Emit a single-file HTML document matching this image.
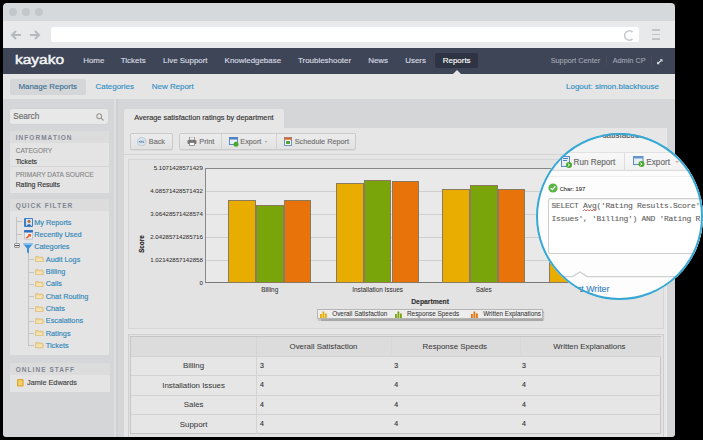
<!DOCTYPE html>
<html><head><meta charset="utf-8">
<style>
*{margin:0;padding:0;box-sizing:border-box}
html,body{width:703px;height:440px;overflow:hidden;background:#000;font-family:"Liberation Sans",sans-serif}
.a{position:absolute}
.t{position:absolute;white-space:nowrap;-webkit-text-stroke:0.14px}
#win{position:absolute;left:3px;top:3px;width:672px;height:434px;border-radius:4px 4px 3px 3px;overflow:hidden}
#pg{position:absolute;left:-3px;top:-3px;width:703px;height:440px}
</style></head><body>
<div id="win"><div id="pg">
<div class="a" style="left:0px;top:3px;width:675.00px;height:17.50px;background:#d5d9dc"></div>
<div class="a" style="left:8.5px;top:8.3px;width:8.00px;height:8.00px;border-radius:50%;background:#c3c7ca"></div>
<div class="a" style="left:21.5px;top:8.3px;width:8.00px;height:8.00px;border-radius:50%;background:#c3c7ca"></div>
<div class="a" style="left:34.5px;top:8.3px;width:8.00px;height:8.00px;border-radius:50%;background:#c3c7ca"></div>
<div class="a" style="left:0px;top:20.5px;width:675.00px;height:27.50px;background:#e7e9eb"></div>
<div class="a" style="left:51px;top:26.6px;width:588.00px;height:15.70px;background:#fff;border-radius:2px"></div>
<svg class="a" style="left:10px;top:29px" width="34" height="12" viewBox="0 0 34 12"><g fill="none" stroke="#b6babe" stroke-width="2"><path d="M11 6H2M6 2L2 6L6 10"/><path d="M20 6H29M25 2L29 6L25 10"/></g></svg>
<svg class="a" style="left:622px;top:29px" width="14" height="13" viewBox="0 0 14 13"><path d="M10.5 3.2A4.6 4.6 0 1 0 10.5 9.8" fill="none" stroke="#c6cacd" stroke-width="1.7"/></svg>
<div class="a" style="left:651.5px;top:29.2px;width:8.50px;height:1.60px;background:#c0c4c7"></div>
<div class="a" style="left:651.5px;top:33.800000000000004px;width:8.50px;height:1.60px;background:#c0c4c7"></div>
<div class="a" style="left:651.5px;top:38.400000000000006px;width:8.50px;height:1.60px;background:#c0c4c7"></div>
<div class="a" style="left:0px;top:48px;width:675.00px;height:25.50px;background:#3e4557"></div>
<div class="t" style="left:14.7px;top:51.97px;font-size:12.5px;line-height:16.25px;color:#f4f5f7;transform:scaleX(1.24);transform-origin:0 50%;-webkit-text-stroke:0.45px #f4f5f7">kayako</div>
<div class="a" style="left:435px;top:53px;width:42.80px;height:15.20px;background:#2f3443;border-radius:2px"></div>
<div class="t" style="left:83.2px;top:55.93px;font-size:7.95px;line-height:10.34px;color:#d9dce3;">Home</div>
<div class="t" style="left:120.8px;top:55.93px;font-size:7.95px;line-height:10.34px;color:#d9dce3;">Tickets</div>
<div class="t" style="left:163px;top:55.93px;font-size:7.95px;line-height:10.34px;color:#d9dce3;">Live Support</div>
<div class="t" style="left:224.6px;top:55.93px;font-size:7.95px;line-height:10.34px;color:#d9dce3;">Knowledgebase</div>
<div class="t" style="left:298px;top:55.93px;font-size:7.95px;line-height:10.34px;color:#d9dce3;">Troubleshooter</div>
<div class="t" style="left:368.2px;top:55.93px;font-size:7.95px;line-height:10.34px;color:#d9dce3;">News</div>
<div class="t" style="left:405.2px;top:55.93px;font-size:7.95px;line-height:10.34px;color:#d9dce3;">Users</div>
<div class="t" style="left:442.8px;top:55.93px;font-size:7.95px;line-height:10.34px;color:#fff;">Reports</div>
<div class="a" style="left:452.5px;top:69.5px;width:0;height:0;border-left:4px solid transparent;border-right:4px solid transparent;border-bottom:4px solid #e5e5e5"></div>
<div class="t" style="left:550.7px;top:56.35px;font-size:7.3px;line-height:9.49px;color:#9ea3b0;">Support Center</div>
<div class="t" style="left:612.7px;top:56.35px;font-size:7.3px;line-height:9.49px;color:#9ea3b0;">Admin CP</div>
<div class="a" style="left:605.8px;top:56px;width:0.80px;height:10.00px;background:#464c5d"></div>
<div class="a" style="left:651.2px;top:56px;width:0.80px;height:10.00px;background:#464c5d"></div>
<svg class="a" style="left:657px;top:59px" width="5.5" height="5.5" viewBox="0 0 6.5 6"><g fill="#d8dbe2"><path d="M6.5 0V3.4L3.1 0Z"/><path d="M0 6V2.6L3.4 6Z"/></g><path d="M1.2 4.8L5.3 1.2" stroke="#d8dbe2" stroke-width="1.4"/></svg>
<div class="a" style="left:0px;top:73.5px;width:675.00px;height:25.00px;background:#e5e5e5"></div>
<div class="a" style="left:10.2px;top:78.6px;width:75.60px;height:16.10px;background:#d5d6d8;border-radius:2px"></div>
<div class="t" style="left:18.4px;top:81.83px;font-size:7.95px;line-height:10.34px;color:#3a7094;">Manage Reports</div>
<div class="t" style="left:95.5px;top:81.83px;font-size:7.95px;line-height:10.34px;color:#2f8fc4;">Categories</div>
<div class="t" style="left:151.8px;top:81.83px;font-size:7.95px;line-height:10.34px;color:#2f8fc4;">New Report</div>
<div class="t" style="left:566px;top:81.70px;font-size:8.0px;line-height:10.40px;color:#2f8fc4;">Logout: simon.blackhouse</div>
<div class="a" style="left:0px;top:98.5px;width:675.00px;height:341.50px;background:#d5d6d8"></div>
<div class="a" style="left:113.6px;top:98.5px;width:2.80px;height:341.50px;background:#dedfe0"></div>
<div class="a" style="left:116.4px;top:98.5px;width:1.20px;height:341.50px;background:#cfd0d2"></div>
<div class="a" style="left:10.2px;top:108.9px;width:97.80px;height:15.30px;background:#e8e8e8;border-radius:2px;box-shadow:0 0 0 0.5px #d0d0d0"></div>
<div class="t" style="left:13.3px;top:112.07px;font-size:8.2px;line-height:10.66px;color:#6a6a6a;">Search</div>
<svg class="a" style="left:96px;top:112.5px" width="8" height="8" viewBox="0 0 8 8"><circle cx="3.2" cy="3.2" r="2.4" fill="none" stroke="#9a9a9a" stroke-width="1.1"/><path d="M5 5L7.5 7.5" stroke="#9a9a9a" stroke-width="1.3"/></svg>
<div class="a" style="left:10.2px;top:130.5px;width:98.80px;height:62.20px;background:#e4e4e4"></div>
<div class="a" style="left:10.2px;top:130.5px;width:98.80px;height:12.90px;background:#dcdcdc"></div>
<div class="t" style="left:15.7px;top:133.58px;font-size:6.5px;line-height:8.45px;color:#7f8593;font-weight:bold;letter-spacing:1.05px;-webkit-text-stroke:0">INFORMATION</div>
<div class="t" style="left:15.7px;top:146.91px;font-size:6.6px;line-height:8.58px;color:#8a8a8a;">CATEGORY</div>
<div class="t" style="left:15.7px;top:157.58px;font-size:6.8px;line-height:8.84px;color:#333;">Tickets</div>
<div class="a" style="left:10.2px;top:166px;width:98.80px;height:0.80px;background:#d6d6d6"></div>
<div class="t" style="left:15.7px;top:170.51px;font-size:6.6px;line-height:8.58px;color:#8a8a8a;">PRIMARY DATA SOURCE</div>
<div class="t" style="left:15.7px;top:180.88px;font-size:6.8px;line-height:8.84px;color:#333;">Rating Results</div>
<div class="a" style="left:10.2px;top:198.8px;width:98.80px;height:156.50px;background:#e4e4e4"></div>
<div class="a" style="left:10.2px;top:198.8px;width:98.80px;height:12.50px;background:#dcdcdc"></div>
<div class="t" style="left:15.7px;top:201.58px;font-size:6.5px;line-height:8.45px;color:#7f8593;font-weight:bold;letter-spacing:1.05px;-webkit-text-stroke:0">QUICK FILTER</div>
<div class="t" style="left:34.2px;top:217.75px;font-size:7.3px;line-height:9.49px;color:#2f86b8;">My Reports</div>
<div class="t" style="left:34.2px;top:229.75px;font-size:7.3px;line-height:9.49px;color:#2f86b8;">Recently Used</div>
<div class="t" style="left:34.2px;top:242.16px;font-size:7.3px;line-height:9.49px;color:#2f86b8;">Categories</div>
<div class="t" style="left:45.8px;top:254.66px;font-size:7.3px;line-height:9.49px;color:#2f86b8;">Audit Logs</div>
<div class="t" style="left:45.8px;top:267.25px;font-size:7.3px;line-height:9.49px;color:#2f86b8;">Billing</div>
<div class="t" style="left:45.8px;top:279.25px;font-size:7.3px;line-height:9.49px;color:#2f86b8;">Calls</div>
<div class="t" style="left:45.8px;top:291.66px;font-size:7.3px;line-height:9.49px;color:#2f86b8;">Chat Routing</div>
<div class="t" style="left:45.8px;top:304.06px;font-size:7.3px;line-height:9.49px;color:#2f86b8;">Chats</div>
<div class="t" style="left:45.8px;top:316.36px;font-size:7.3px;line-height:9.49px;color:#2f86b8;">Escalations</div>
<div class="t" style="left:45.8px;top:328.66px;font-size:7.3px;line-height:9.49px;color:#2f86b8;">Ratings</div>
<div class="t" style="left:45.8px;top:340.75px;font-size:7.3px;line-height:9.49px;color:#2f86b8;">Tickets</div>
<div class="a" style="left:16px;top:217px;width:1.00px;height:25.50px;background:#c4c4c4"></div>
<div class="a" style="left:16px;top:221.3px;width:6.00px;height:0.80px;background:#c4c4c4"></div>
<div class="a" style="left:16px;top:233.6px;width:6.00px;height:0.80px;background:#c4c4c4"></div>
<div class="a" style="left:28px;top:252.5px;width:1.00px;height:93.00px;background:#c4c4c4"></div>
<div class="a" style="left:28px;top:259.0px;width:6.00px;height:0.80px;background:#c4c4c4"></div>
<div class="a" style="left:28px;top:271.59999999999997px;width:6.00px;height:0.80px;background:#c4c4c4"></div>
<div class="a" style="left:28px;top:283.59999999999997px;width:6.00px;height:0.80px;background:#c4c4c4"></div>
<div class="a" style="left:28px;top:296.0px;width:6.00px;height:0.80px;background:#c4c4c4"></div>
<div class="a" style="left:28px;top:308.4px;width:6.00px;height:0.80px;background:#c4c4c4"></div>
<div class="a" style="left:28px;top:320.7px;width:6.00px;height:0.80px;background:#c4c4c4"></div>
<div class="a" style="left:28px;top:333.0px;width:6.00px;height:0.80px;background:#c4c4c4"></div>
<div class="a" style="left:28px;top:345.09999999999997px;width:6.00px;height:0.80px;background:#c4c4c4"></div>
<div class="a" style="left:14.1px;top:242.5px;width:6.10px;height:5.70px;background:linear-gradient(#f4f4f4,#d6d6d6);border:0.6px solid #9a9a9a;border-radius:1px"></div>
<div class="a" style="left:15.4px;top:245px;width:3.50px;height:0.80px;background:#555"></div>
<svg class="a" style="left:23.5px;top:217.8px" width="9" height="9" viewBox="0 0 9 9"><rect x="0" y="0" width="9" height="9" rx="1" fill="#3d7fc4"/><rect x="2" y="1" width="6" height="7" fill="#d8e6f3"/><circle cx="5" cy="3.4" r="1.6" fill="#b8743a"/><path d="M2.6 8C2.6 5.8 7.4 5.8 7.4 8Z" fill="#3b73b8"/></svg>
<svg class="a" style="left:23.5px;top:230.2px" width="9" height="9.5" viewBox="0 0 9 9.5"><rect x="0" y="0" width="9" height="9.5" rx="1" fill="#b9bec6"/><rect x="0" y="0" width="9" height="2.6" rx="0.8" fill="#2f72c2"/><rect x="0.8" y="2.8" width="7.4" height="5.9" fill="#eceef1"/><path d="M1.5 8L4.5 5.2L4 4H7V7L6 6.2L3 8.6Z" fill="#e8602a"/></svg>
<svg class="a" style="left:22.7px;top:242.7px" width="10" height="11" viewBox="0 0 10 11"><path d="M0 0.8Q5 -0.6 10 0.8L6 5.4V10.6L4 9.6V5.4Z" fill="#3f92d6"/><ellipse cx="5" cy="1" rx="4.6" ry="0.9" fill="#8cc4ee"/></svg>
<svg class="a" style="left:35px;top:256.30px" width="8.6" height="6.2" viewBox="0 0 8.6 6.2"><path d="M0.4 1.2Q0.4 0.4 1.2 0.4H3.2L4 1.2H7.4Q8.2 1.2 8.2 2V5.4Q8.2 5.8 7.4 5.8H1.2Q0.4 5.8 0.4 5.4Z" fill="#ecd08e" stroke="#d8b46a" stroke-width="0.6"/><rect x="1.4" y="2.4" width="5.8" height="2.6" fill="#f6e3b5"/></svg>
<svg class="a" style="left:35px;top:268.90px" width="8.6" height="6.2" viewBox="0 0 8.6 6.2"><path d="M0.4 1.2Q0.4 0.4 1.2 0.4H3.2L4 1.2H7.4Q8.2 1.2 8.2 2V5.4Q8.2 5.8 7.4 5.8H1.2Q0.4 5.8 0.4 5.4Z" fill="#ecd08e" stroke="#d8b46a" stroke-width="0.6"/><rect x="1.4" y="2.4" width="5.8" height="2.6" fill="#f6e3b5"/></svg>
<svg class="a" style="left:35px;top:280.90px" width="8.6" height="6.2" viewBox="0 0 8.6 6.2"><path d="M0.4 1.2Q0.4 0.4 1.2 0.4H3.2L4 1.2H7.4Q8.2 1.2 8.2 2V5.4Q8.2 5.8 7.4 5.8H1.2Q0.4 5.8 0.4 5.4Z" fill="#ecd08e" stroke="#d8b46a" stroke-width="0.6"/><rect x="1.4" y="2.4" width="5.8" height="2.6" fill="#f6e3b5"/></svg>
<svg class="a" style="left:35px;top:293.30px" width="8.6" height="6.2" viewBox="0 0 8.6 6.2"><path d="M0.4 1.2Q0.4 0.4 1.2 0.4H3.2L4 1.2H7.4Q8.2 1.2 8.2 2V5.4Q8.2 5.8 7.4 5.8H1.2Q0.4 5.8 0.4 5.4Z" fill="#ecd08e" stroke="#d8b46a" stroke-width="0.6"/><rect x="1.4" y="2.4" width="5.8" height="2.6" fill="#f6e3b5"/></svg>
<svg class="a" style="left:35px;top:305.70px" width="8.6" height="6.2" viewBox="0 0 8.6 6.2"><path d="M0.4 1.2Q0.4 0.4 1.2 0.4H3.2L4 1.2H7.4Q8.2 1.2 8.2 2V5.4Q8.2 5.8 7.4 5.8H1.2Q0.4 5.8 0.4 5.4Z" fill="#ecd08e" stroke="#d8b46a" stroke-width="0.6"/><rect x="1.4" y="2.4" width="5.8" height="2.6" fill="#f6e3b5"/></svg>
<svg class="a" style="left:35px;top:318.00px" width="8.6" height="6.2" viewBox="0 0 8.6 6.2"><path d="M0.4 1.2Q0.4 0.4 1.2 0.4H3.2L4 1.2H7.4Q8.2 1.2 8.2 2V5.4Q8.2 5.8 7.4 5.8H1.2Q0.4 5.8 0.4 5.4Z" fill="#ecd08e" stroke="#d8b46a" stroke-width="0.6"/><rect x="1.4" y="2.4" width="5.8" height="2.6" fill="#f6e3b5"/></svg>
<svg class="a" style="left:35px;top:330.30px" width="8.6" height="6.2" viewBox="0 0 8.6 6.2"><path d="M0.4 1.2Q0.4 0.4 1.2 0.4H3.2L4 1.2H7.4Q8.2 1.2 8.2 2V5.4Q8.2 5.8 7.4 5.8H1.2Q0.4 5.8 0.4 5.4Z" fill="#ecd08e" stroke="#d8b46a" stroke-width="0.6"/><rect x="1.4" y="2.4" width="5.8" height="2.6" fill="#f6e3b5"/></svg>
<svg class="a" style="left:35px;top:342.40px" width="8.6" height="6.2" viewBox="0 0 8.6 6.2"><path d="M0.4 1.2Q0.4 0.4 1.2 0.4H3.2L4 1.2H7.4Q8.2 1.2 8.2 2V5.4Q8.2 5.8 7.4 5.8H1.2Q0.4 5.8 0.4 5.4Z" fill="#ecd08e" stroke="#d8b46a" stroke-width="0.6"/><rect x="1.4" y="2.4" width="5.8" height="2.6" fill="#f6e3b5"/></svg>
<div class="a" style="left:10px;top:363px;width:99.50px;height:28.70px;background:#e4e4e4"></div>
<div class="a" style="left:10px;top:363px;width:99.50px;height:12.30px;background:#dcdcdc"></div>
<div class="t" style="left:15.7px;top:365.88px;font-size:6.5px;line-height:8.45px;color:#7f8593;font-weight:bold;letter-spacing:1.05px;-webkit-text-stroke:0">ONLINE STAFF</div>
<svg class="a" style="left:17px;top:379.3px" width="6.6" height="7.6" viewBox="0 0 6.6 7.6"><rect x="0" y="0" width="6.6" height="7.6" rx="1" fill="#e2a52c"/><rect x="1.2" y="1.2" width="4.2" height="5.2" fill="#f2cf6a"/></svg>
<div class="t" style="left:27px;top:378.06px;font-size:7.3px;line-height:9.49px;color:#444;">Jamie Edwards</div>
<div class="a" style="left:123.5px;top:109px;width:160.50px;height:18.50px;background:#e6e6e6;border-radius:2px 2px 0 0"></div>
<div class="t" style="left:134.2px;top:113.31px;font-size:7.37px;line-height:9.58px;color:#333;">Average satisfaction ratings by department</div>
<div class="a" style="left:123.5px;top:127.5px;width:543.50px;height:312.50px;background:#e6e6e6;border-right:0.8px solid #ececec"></div>
<div class="a" style="left:123.5px;top:153.5px;width:543.50px;height:0.80px;background:#d3d3d3"></div>
<div class="a" style="left:129.6px;top:133px;width:43.20px;height:17.00px;background:linear-gradient(#ececec,#e2e2e2);border:0.8px solid #cbcbcb;border-radius:2px;box-shadow:0 0.6px 0 #d0d0d0"></div>
<svg class="a" style="left:137px;top:136.5px" width="9.5" height="9.5" viewBox="0 0 9.5 9.5"><circle cx="4.75" cy="4.75" r="4.3" fill="#d9e3ec" stroke="#b3c5d6" stroke-width="0.8"/><path d="M3.2 3.8L2.3 4.75L3.2 5.7M5 3.8L4.1 4.75L5 5.7M6.8 3.8L5.9 4.75L6.8 5.7" fill="none" stroke="#2d5f95" stroke-width="0.9"/></svg>
<div class="t" style="left:148.8px;top:136.66px;font-size:7.3px;line-height:9.49px;color:#707070;">Back</div>
<div class="a" style="left:179.3px;top:133px;width:176.70px;height:17.00px;background:linear-gradient(#ececec,#e2e2e2);border:0.8px solid #cbcbcb;border-radius:2px;box-shadow:0 0.6px 0 #d0d0d0"></div>
<div class="a" style="left:221.3px;top:134px;width:0.80px;height:15.00px;background:#d2d2d2"></div>
<div class="a" style="left:275.8px;top:134px;width:0.80px;height:15.00px;background:#d2d2d2"></div>
<svg class="a" style="left:187px;top:137px" width="10" height="9" viewBox="0 0 10 9"><rect x="2.5" y="0" width="5" height="3" fill="#fafafa" stroke="#777" stroke-width="0.7"/><rect x="0.5" y="3" width="9" height="4" rx="1" fill="#777"/><rect x="2.5" y="5.5" width="5" height="3" fill="#fafafa" stroke="#777" stroke-width="0.7"/></svg>
<div class="t" style="left:199.3px;top:136.66px;font-size:7.3px;line-height:9.49px;color:#707070;">Print</div>
<svg class="a" style="left:228.5px;top:136.5px" width="10" height="10" viewBox="0 0 10 10"><rect x="0.5" y="0.5" width="8" height="7" fill="#e8f0f8" stroke="#4a7fc0" stroke-width="0.9"/><rect x="0.5" y="0.5" width="8" height="2" fill="#4a7fc0"/><circle cx="7" cy="7.3" r="2.5" fill="#46a82c"/></svg>
<div class="t" style="left:240.3px;top:136.66px;font-size:7.3px;line-height:9.49px;color:#707070;">Export</div>
<div class="a" style="left:264.5px;top:141px;width:0;height:0;border-left:1.8px solid transparent;border-right:1.8px solid transparent;border-top:2px solid #999"></div>
<svg class="a" style="left:284px;top:137px" width="8" height="9" viewBox="0 0 8 9"><rect x="0.4" y="0.4" width="7.2" height="8" fill="#f1f5f8" stroke="#4a7fc0" stroke-width="0.8"/><rect x="0.4" y="0.4" width="7.2" height="2.4" fill="#e06a2a"/><rect x="2" y="4" width="4" height="3" fill="#5aa03c"/></svg>
<div class="t" style="left:294.7px;top:136.66px;font-size:7.3px;line-height:9.49px;color:#707070;">Schedule Report</div>
<div class="a" style="left:128.3px;top:159px;width:535.70px;height:169.50px;background:#e3e3e3;border:0.8px solid #d6d6d6"></div>
<div class="a" style="left:205.2px;top:168.2px;width:434.80px;height:114.80px;background:#e9e9e9;border:1px solid #888;border-right:none;border-bottom:1px solid #777"></div>
<div class="t" style="right:500.20px;top:164.03px;font-size:6.1px;line-height:7.93px;color:#333;-webkit-text-stroke:0.05px">5.1071428571429</div>
<div class="a" style="left:206.2px;top:190.76px;width:433.80px;height:0.90px;background:#cfcfcf"></div>
<div class="t" style="right:500.20px;top:187.00px;font-size:6.1px;line-height:7.93px;color:#333;-webkit-text-stroke:0.05px">4.08571428571432</div>
<div class="a" style="left:206.2px;top:213.72px;width:433.80px;height:0.90px;background:#cfcfcf"></div>
<div class="t" style="right:500.20px;top:209.96px;font-size:6.1px;line-height:7.93px;color:#333;-webkit-text-stroke:0.05px">3.06428571428574</div>
<div class="a" style="left:206.2px;top:236.67999999999998px;width:433.80px;height:0.90px;background:#cfcfcf"></div>
<div class="t" style="right:500.20px;top:232.91px;font-size:6.1px;line-height:7.93px;color:#333;-webkit-text-stroke:0.05px">2.04285714285716</div>
<div class="a" style="left:206.2px;top:259.64px;width:433.80px;height:0.90px;background:#cfcfcf"></div>
<div class="t" style="right:500.20px;top:255.88px;font-size:6.1px;line-height:7.93px;color:#333;-webkit-text-stroke:0.05px">1.02142857142858</div>
<div class="t" style="right:500.20px;top:278.84px;font-size:6.1px;line-height:7.93px;color:#333;-webkit-text-stroke:0.05px">0</div>
<div class="t" style="left:142.4px;top:240.01px;font-size:6.3px;line-height:8.19px;color:#222;font-weight:bold;transform:translateX(-50%) rotate(-90deg);">Score</div>
<div class="a" style="left:228.0px;top:200.4px;width:27.80px;height:82.60px;background:#e8ad00;border:0.8px solid #8a7a60"></div>
<div class="a" style="left:255.8px;top:204.5px;width:27.80px;height:78.50px;background:#79a50a;border:0.8px solid #8a7a60"></div>
<div class="a" style="left:283.6px;top:200.4px;width:27.80px;height:82.60px;background:#e8730a;border:0.8px solid #8a7a60"></div>
<div class="t" style="left:-30.30px;width:600px;text-align:center;top:286.24px;font-size:6.4px;line-height:8.32px;color:#333;-webkit-text-stroke:0.05px">Billing</div>
<div class="a" style="left:335.9px;top:182.6px;width:27.80px;height:100.40px;background:#e8ad00;border:0.8px solid #8a7a60"></div>
<div class="a" style="left:363.7px;top:179.7px;width:27.80px;height:103.30px;background:#79a50a;border:0.8px solid #8a7a60"></div>
<div class="a" style="left:391.5px;top:181.3px;width:27.80px;height:101.70px;background:#e8730a;border:0.8px solid #8a7a60"></div>
<div class="t" style="left:77.60px;width:600px;text-align:center;top:286.24px;font-size:6.4px;line-height:8.32px;color:#333;-webkit-text-stroke:0.05px">Installation Issues</div>
<div class="a" style="left:442.1px;top:188.6px;width:27.80px;height:94.40px;background:#e8ad00;border:0.8px solid #8a7a60"></div>
<div class="a" style="left:469.90000000000003px;top:184.5px;width:27.80px;height:98.50px;background:#79a50a;border:0.8px solid #8a7a60"></div>
<div class="a" style="left:497.70000000000005px;top:188.6px;width:27.80px;height:94.40px;background:#e8730a;border:0.8px solid #8a7a60"></div>
<div class="t" style="left:183.80px;width:600px;text-align:center;top:286.24px;font-size:6.4px;line-height:8.32px;color:#333;-webkit-text-stroke:0.05px">Sales</div>
<div class="a" style="left:549.2px;top:192px;width:27.80px;height:91.00px;background:#e8ad00;border:0.8px solid #8a7a60"></div>
<div class="a" style="left:577.0px;top:188px;width:27.80px;height:95.00px;background:#79a50a;border:0.8px solid #8a7a60"></div>
<div class="a" style="left:604.8000000000001px;top:190px;width:27.80px;height:93.00px;background:#e8730a;border:0.8px solid #8a7a60"></div>
<div class="t" style="left:290.90px;width:600px;text-align:center;top:286.24px;font-size:6.4px;line-height:8.32px;color:#333;-webkit-text-stroke:0.05px">Support</div>
<div class="t" style="left:130.10px;width:600px;text-align:center;top:297.68px;font-size:6.8px;line-height:8.84px;color:#333;font-weight:bold">Department</div>
<div class="a" style="left:317.4px;top:308.9px;width:225.70px;height:9.80px;background:#ededed;border:0.8px solid #b5b5b5;box-shadow:1px 1.5px 1px #a8a8a8"></div>
<svg class="a" style="left:319.5px;top:310.5px" width="7" height="7" viewBox="0 0 7 7"><g fill="#e8ad00"><rect x="0" y="3" width="1.8" height="4"/><rect x="2.5" y="0.5" width="1.8" height="6.5"/><rect x="5" y="2.5" width="1.8" height="4.5"/></g></svg>
<svg class="a" style="left:395px;top:310.5px" width="7" height="7" viewBox="0 0 7 7"><g fill="#79a50a"><rect x="0" y="3" width="1.8" height="4"/><rect x="2.5" y="0.5" width="1.8" height="6.5"/><rect x="5" y="2.5" width="1.8" height="4.5"/></g></svg>
<svg class="a" style="left:470.5px;top:310.5px" width="7" height="7" viewBox="0 0 7 7"><g fill="#e8730a"><rect x="0" y="3" width="1.8" height="4"/><rect x="2.5" y="0.5" width="1.8" height="6.5"/><rect x="5" y="2.5" width="1.8" height="4.5"/></g></svg>
<div class="t" style="left:332.2px;top:310.24px;font-size:6.4px;line-height:8.32px;color:#333;-webkit-text-stroke:0.05px">Overall Satisfaction</div>
<div class="t" style="left:407px;top:310.24px;font-size:6.4px;line-height:8.32px;color:#333;-webkit-text-stroke:0.05px">Response Speeds</div>
<div class="t" style="left:483.2px;top:310.31px;font-size:6.3px;line-height:8.19px;color:#333;-webkit-text-stroke:0.05px">Written Explanations</div>
<div class="a" style="left:127.6px;top:333.5px;width:536.90px;height:106.50px;background:#e3e3e3;border:0.8px solid #cfcfcf"></div>
<div class="a" style="left:130.2px;top:336.3px;width:531.00px;height:97.70px;background:#e6e6e6;border:0.9px solid #c5c5c5"></div>
<div class="a" style="left:131px;top:337px;width:529.50px;height:18.80px;background:#dcdcdc"></div>
<div class="a" style="left:255.5px;top:337px;width:0.80px;height:97.00px;background:#d4d4d4"></div>
<div class="a" style="left:391px;top:337px;width:0.80px;height:18.80px;background:#d8d8d8"></div>
<div class="a" style="left:520px;top:337px;width:0.80px;height:18.80px;background:#d8d8d8"></div>
<div class="a" style="left:131px;top:355.90000000000003px;width:529.50px;height:0.90px;background:#d3d3d3"></div>
<div class="a" style="left:131px;top:374.90000000000003px;width:529.50px;height:0.90px;background:#d3d3d3"></div>
<div class="a" style="left:131px;top:394.6px;width:529.50px;height:0.90px;background:#d3d3d3"></div>
<div class="a" style="left:131px;top:414.20000000000005px;width:529.50px;height:0.90px;background:#d3d3d3"></div>
<div class="t" style="left:23.50px;width:600px;text-align:center;top:341.67px;font-size:7.9px;line-height:10.27px;color:#3a3a3a;-webkit-text-stroke:0.05px">Overall Satisfaction</div>
<div class="t" style="left:154.80px;width:600px;text-align:center;top:341.67px;font-size:7.9px;line-height:10.27px;color:#3a3a3a;-webkit-text-stroke:0.05px">Response Speeds</div>
<div class="t" style="left:289.40px;width:600px;text-align:center;top:341.67px;font-size:7.9px;line-height:10.27px;color:#3a3a3a;-webkit-text-stroke:0.05px">Written Explanations</div>
<div class="t" style="left:-106.40px;width:600px;text-align:center;top:361.47px;font-size:7.9px;line-height:10.27px;color:#3a3a3a;-webkit-text-stroke:0.05px">Billing</div>
<div class="t" style="left:260px;top:360.85px;font-size:7px;line-height:9.10px;color:#333;">3</div>
<div class="t" style="left:394.3px;top:360.85px;font-size:7px;line-height:9.10px;color:#333;">3</div>
<div class="t" style="left:522px;top:360.85px;font-size:7px;line-height:9.10px;color:#333;">3</div>
<div class="t" style="left:-106.40px;width:600px;text-align:center;top:380.97px;font-size:7.9px;line-height:10.27px;color:#3a3a3a;-webkit-text-stroke:0.05px">Installation Issues</div>
<div class="t" style="left:260px;top:380.35px;font-size:7px;line-height:9.10px;color:#333;">4</div>
<div class="t" style="left:394.3px;top:380.35px;font-size:7px;line-height:9.10px;color:#333;">4</div>
<div class="t" style="left:522px;top:380.35px;font-size:7px;line-height:9.10px;color:#333;">4</div>
<div class="t" style="left:-106.40px;width:600px;text-align:center;top:400.47px;font-size:7.9px;line-height:10.27px;color:#3a3a3a;-webkit-text-stroke:0.05px">Sales</div>
<div class="t" style="left:260px;top:399.85px;font-size:7px;line-height:9.10px;color:#333;">4</div>
<div class="t" style="left:394.3px;top:399.85px;font-size:7px;line-height:9.10px;color:#333;">4</div>
<div class="t" style="left:522px;top:399.85px;font-size:7px;line-height:9.10px;color:#333;">4</div>
<div class="t" style="left:-106.40px;width:600px;text-align:center;top:419.97px;font-size:7.9px;line-height:10.27px;color:#3a3a3a;-webkit-text-stroke:0.05px">Support</div>
<div class="t" style="left:260px;top:419.35px;font-size:7px;line-height:9.10px;color:#333;">4</div>
<div class="t" style="left:394.3px;top:419.35px;font-size:7px;line-height:9.10px;color:#333;">4</div>
<div class="t" style="left:522px;top:419.35px;font-size:7px;line-height:9.10px;color:#333;">4</div>
</div></div>
<div class="a" style="left:536.00px;top:133.10px;width:167.00px;height:167.00px;border-radius:50%;overflow:hidden;background:#fdfdfd">
<div class="a" style="left:-536.00px;top:-133.10px;width:703px;height:440px">
<div class="a" style="left:500px;top:120px;width:203.00px;height:31.50px;background:#f3f3f3"></div>
<div class="a" style="left:500px;top:151.5px;width:203.00px;height:19.50px;background:linear-gradient(#f8f8f8,#f1f1f1);border-top:1px solid #e2e2e2;border-bottom:1px solid #dadada"></div>
<div class="a" style="left:624px;top:152px;width:1.00px;height:18.50px;background:#dedede"></div>
<svg class="a" style="left:560.5px;top:155.5px" width="11" height="12" viewBox="0 0 11 12"><rect x="0.5" y="0.5" width="8" height="10" fill="#e9eef5" stroke="#4d7fbf" stroke-width="0.9"/><rect x="2" y="2" width="5" height="1" fill="#4d7fbf"/><rect x="2" y="4" width="4" height="1" fill="#4d7fbf"/><circle cx="8" cy="9" r="3" fill="#49a830"/><path d="M6.8 7.6L8.6 9L6.8 10.4" fill="none" stroke="#fff" stroke-width="0.9"/></svg>
<div class="t" style="left:573.6px;top:157.59px;font-size:8.17px;line-height:10.62px;color:#6a6a6a;">Run Report</div>
<svg class="a" style="left:632.8px;top:155.8px" width="12" height="11" viewBox="0 0 12 11"><rect x="0.5" y="0.5" width="9.5" height="8" fill="#e9eef5" stroke="#4d7fbf" stroke-width="0.9"/><rect x="0.5" y="0.5" width="9.5" height="2" fill="#6b9ad0"/><circle cx="8.5" cy="8" r="3" fill="#49a830"/><path d="M7.3 6.6L9.1 8L7.3 9.4" fill="none" stroke="#fff" stroke-width="0.9"/></svg>
<div class="t" style="left:646.3px;top:157.77px;font-size:8.2px;line-height:10.66px;color:#6a6a6a;">Export</div>
<div class="a" style="left:674.5px;top:161px;width:0;height:0;border-left:2px solid transparent;border-right:2px solid transparent;border-top:2.2px solid #e6a58a"></div>
<div class="a" style="left:500px;top:175.8px;width:203.00px;height:0.70px;background:#ededed"></div>
<svg class="a" style="left:548px;top:183px" width="10" height="10" viewBox="0 0 10 10"><circle cx="5" cy="5" r="4.6" fill="#5cb347"/><path d="M2.6 5.1L4.3 6.7L7.4 3.4" fill="none" stroke="#fff" stroke-width="1.3"/></svg>
<div class="t" style="left:559.7px;top:186.33px;font-size:5.8px;line-height:7.54px;color:#444;">Char: 197</div>
<div class="a" style="left:548.2px;top:197.5px;width:171.80px;height:56.00px;background:#fff;border:1px solid #cfcfcf;border-radius:2px;box-shadow:inset 0 1px 1px #eee"></div>
<div class="t" style="left:551.6px;top:201.00px;font-size:8px;line-height:10.40px;color:#606060;font-family:'Liberation Mono',monospace;letter-spacing:-0.3px;-webkit-text-stroke:0.1px">SELECT Avg('Rating Results.Score'</div>
<div class="t" style="left:551.6px;top:213.70px;font-size:8px;line-height:10.40px;color:#606060;font-family:'Liberation Mono',monospace;letter-spacing:-0.3px;-webkit-text-stroke:0.1px">Issues', 'Billing') AND 'Rating R</div>
<svg class="a" style="left:583px;top:209.3px" width="14" height="3" viewBox="0 0 14 3"><path d="M0 2L1.5 0.5L3 2L4.5 0.5L6 2L7.5 0.5L9 2L10.5 0.5L12 2L13.5 0.5" fill="none" stroke="#e0453a" stroke-width="0.8"/></svg>
<svg class="a" style="left:530px;top:268px" width="173" height="14" viewBox="0 0 173 14"><path d="M0 8.6H42.5L50 4L57 8.6H173" fill="none" stroke="#d0d0d0" stroke-width="1.3"/></svg>
<div class="t" style="left:602.4px;top:130.41px;font-size:8.3px;line-height:10.79px;color:#555;">satisfaction ratings</div>
<div class="t" style="left:557.3px;top:284.08px;font-size:8.8px;line-height:11.44px;color:#3a86be;">Report Writer</div>
</div></div>
<div class="a" style="left:536.00px;top:133.10px;width:167.00px;height:167.00px;border-radius:50%;border:2.9px solid #37a7d3"></div>
</body></html>
